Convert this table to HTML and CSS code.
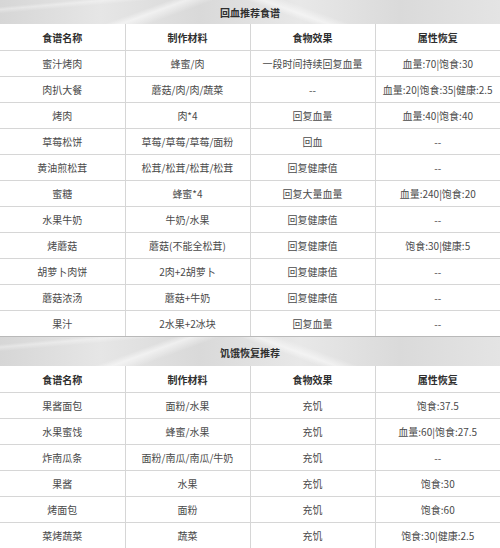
FILE: index.html
```html
<!DOCTYPE html>
<html lang="zh">
<head>
<meta charset="utf-8">
<link rel="stylesheet" href="styles.css">
</head>
<body>
<div class="page">
  <div class="banner banner-top"><span>回血推荐食谱</span></div>
  <table class="recipes">
    <tr class="head"><td>食谱名称</td><td>制作材料</td><td>食物效果</td><td>属性恢复</td></tr>
    <tr><td>蜜汁烤肉</td><td>蜂蜜/肉</td><td>一段时间持续回复血量</td><td>血量:70|饱食:30</td></tr>
    <tr><td>肉扒大餐</td><td>蘑菇/肉/肉/蔬菜</td><td>--</td><td>血量:20|饱食:35|健康:2.5</td></tr>
    <tr><td>烤肉</td><td>肉*4</td><td>回复血量</td><td>血量:40|饱食:40</td></tr>
    <tr><td>草莓松饼</td><td>草莓/草莓/草莓/面粉</td><td>回血</td><td>--</td></tr>
    <tr><td>黄油煎松茸</td><td>松茸/松茸/松茸/松茸</td><td>回复健康值</td><td>--</td></tr>
    <tr><td>蜜糖</td><td>蜂蜜*4</td><td>回复大量血量</td><td>血量:240|饱食:20</td></tr>
    <tr><td>水果牛奶</td><td>牛奶/水果</td><td>回复健康值</td><td>--</td></tr>
    <tr><td>烤蘑菇</td><td>蘑菇(不能全松茸)</td><td>回复健康值</td><td>饱食:30|健康:5</td></tr>
    <tr><td>胡萝卜肉饼</td><td>2肉+2胡萝卜</td><td>回复健康值</td><td>--</td></tr>
    <tr><td>蘑菇浓汤</td><td>蘑菇+牛奶</td><td>回复健康值</td><td>--</td></tr>
    <tr><td>果汁</td><td>2水果+2冰块</td><td>回复血量</td><td>--</td></tr>
  </table>
  <div class="banner banner-mid"><span>饥饿恢复推荐</span></div>
  <table class="recipes">
    <tr class="head"><td>食谱名称</td><td>制作材料</td><td>食物效果</td><td>属性恢复</td></tr>
    <tr><td>果酱面包</td><td>面粉/水果</td><td>充饥</td><td>饱食:37.5</td></tr>
    <tr><td>水果蜜饯</td><td>蜂蜜/水果</td><td>充饥</td><td>血量:60|饱食:27.5</td></tr>
    <tr><td>炸南瓜条</td><td>面粉/南瓜/南瓜/牛奶</td><td>充饥</td><td>--</td></tr>
    <tr><td>果酱</td><td>水果</td><td>充饥</td><td>饱食:30</td></tr>
    <tr><td>烤面包</td><td>面粉</td><td>充饥</td><td>饱食:60</td></tr>
    <tr><td>菜烤蔬菜</td><td>蔬菜</td><td>充饥</td><td>饱食:30|健康:2.5</td></tr>
  </table>
</div>
</body>
</html>
```

FILE: styles.css
```css
html, body {
  margin: 0;
  padding: 0;
  background: #ffffff;
}

.page {
  width: 500px;
  height: 548px;
  overflow: hidden;
  font-family: "Noto Sans CJK SC", "Noto Sans", sans-serif;
  font-size: 10px;
  color: #4a4a4a;
}

.banner {
  display: flex;
  align-items: center;
  justify-content: center;
  font-weight: bold;
  color: #2e2e2e;
  background-color: #dcdcdc;
  background-image:
    linear-gradient(160deg, transparent 0 30%, rgba(255,255,255,0.55) 33%, transparent 38% 100%),
    linear-gradient(20deg, transparent 0 55%, rgba(255,255,255,0.5) 58%, transparent 62% 100%),
    linear-gradient(175deg, transparent 0 10%, rgba(255,255,255,0.35) 14%, transparent 20% 100%),
    linear-gradient(90deg, #d6d6d6 0%, #e6e6e6 20%, #d9d9d9 40%, #e8e8e8 60%, #dadada 80%, #e4e4e4 100%);
}

.banner-top {
  height: 24px;
}

.banner-mid {
  height: 29px;
  border-top: 1px solid #b9b9b9;
}

.banner span {
  padding-top: 1px;
}

.recipes {
  width: 500px;
  border-collapse: collapse;
  table-layout: fixed;
}

.recipes td {
  height: 25px;
  padding: 0;
  text-align: center;
  vertical-align: middle;
  border-top: 1px solid #d6d6d6;
  border-left: 1px solid #d6d6d6;
  white-space: nowrap;
  overflow: hidden;
}

.recipes tr:first-child td {
  border-top: none;
  height: 26px;
}

.recipes td:first-child {
  border-left: none;
}

.recipes .head td {
  font-weight: bold;
  color: #2e2e2e;
}
```
